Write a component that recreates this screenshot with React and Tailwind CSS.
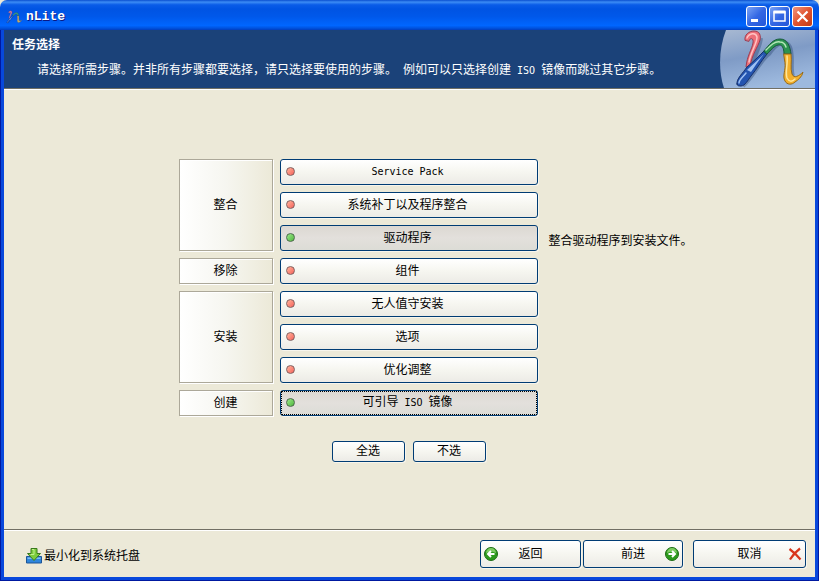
import { useState } from "react";

const GROUPS = [
  {
    label: "整合",
    span: "row-span-3",
    tasks: [
      { id: "sp", name: "Service Pack" },
      { id: "hotfix", name: "系统补丁以及程序整合" },
      { id: "drivers", name: "驱动程序", hint: "整合驱动程序到安装文件。" },
    ],
  },
  { label: "移除", span: "row-span-1", tasks: [{ id: "components", name: "组件" }] },
  {
    label: "安装",
    span: "row-span-3",
    tasks: [
      { id: "unattended", name: "无人值守安装" },
      { id: "options", name: "选项" },
      { id: "tweaks", name: "优化调整" },
    ],
  },
  { label: "创建", span: "row-span-1", tasks: [{ id: "iso", name: "可引导 ISO 镜像" }] },
];

const ALL_IDS = GROUPS.flatMap((g) => g.tasks.map((t) => t.id));

const BUTTON =
  "rounded-[3px] border border-[#003c74] shadow-[1px_1px_0_#f7f5ec] text-black";
const RAISED =
  "bg-linear-to-b from-white via-[#f6f6f0] to-[#ecebe6] hover:to-[#f6f4ea]";
const PRESSED = "bg-linear-to-b from-[#dcd8d2] via-[#e3e0dc] to-[#dcdcd6]";

// Latin words are set in a half-width face so they line up with the Chinese text
function Mixed({ text }) {
  return text.split(/([ A-Za-z]+)/).map((part, i) =>
    i % 2 ? (
      <span key={i} className="font-['DejaVu_Sans_Mono',monospace] text-[10px] whitespace-pre">
        {part}
      </span>
    ) : (
      part
    )
  );
}

function LogoStrokes() {
  return (
    <g strokeLinejoin="round" strokeLinecap="round">
      {/* red */}
      <path
        d="M26 10 C25 5 30 1 35 1 C41 1 42 6 41 10 C39 17 33 24 31 37 L27 37 C28 26 33 19 34 13 C35 8 31 7 30 11 Z"
        fill="#ee6f78"
        stroke="#9c3c50"
      />
      <path d="M28 8 C30 3 37 2 38 7 C38 14 32 21 30 32" fill="none" stroke="#ffc2c2" strokeWidth="1.500" />
      {/* blue */}
      <path
        d="M18 54 C17 49 24 43 28 37 C34 32 40 26 45 21 L48 24 C42 31 38 39 32 46 C29 50 26 56 22 56 C20 56 18 56 18 54 Z"
        fill="#2454b0"
        stroke="#16306c"
      />
      <path d="M28 40 C34 34 40 29 45 24 C40 30 36 36 32 42 Z" fill="#9fc0f2" />
      <path d="M20 53 C20 50 24 47 27 43" fill="none" stroke="#9fc0f2" strokeWidth="1.500" />
      {/* green */}
      <path
        d="M45 21 C50 15 54 9 61 9 C69 9 71 17 72 24 L65 24 C65 18 63 14 59 15 C55 16 52 20 48 24 Z"
        fill="#2b9250"
        stroke="#17593a"
      />
      <path d="M47 20 C52 15 56 11 61 12 C64 12 66 14 67 17" fill="none" stroke="#b5e6b8" strokeWidth="1.500" />
      {/* yellow */}
      <path
        d="M65 24 H72 C73 31 71 38 73 44 C75 49 80 46 84 42 C83 47 79 50 76 52 C73 55 68 55 66 51 C63 46 67 40 66 33 Z"
        fill="#f3b02c"
        stroke="#946a1c"
      />
      <path d="M68 26 C69 34 66 42 68 48 C70 52 73 52 76 49" fill="none" stroke="#ffe69a" strokeWidth="1.500" />
    </g>
  );
}

function HeaderLogo() {
  return (
    <svg viewBox="0 0 96 58" className="h-[58px] w-24 shrink-0" aria-hidden="true">
      <defs>
        <linearGradient id="disc" x1="0" y1="0" x2="0.3" y2="1">
          <stop offset="0" stopColor="#a8b9d2" />
          <stop offset="0.5" stopColor="#7f9bc6" />
          <stop offset="1" stopColor="#9db9de" />
        </linearGradient>
      </defs>
      <path d="M7 0 H96 V58 H5 C-1 40 0 18 7 0 Z" fill="url(#disc)" />
      <path
        d="M42 8 C41 18 35 25 33 37 M24 56 C34 47 40 32 50 24 C57 14 66 8 71 17 C75 27 71 38 74 46"
        fill="none"
        stroke="#1c3868"
        strokeWidth="4"
        opacity="0.35"
      />
      <LogoStrokes />
    </svg>
  );
}

function CaptionButton({ label, close, children }) {
  return (
    <button
      aria-label={label}
      className={`flex size-[21px] items-center justify-center rounded-[3px] border border-white bg-linear-to-br ${
        close ? "from-[#f0947c] via-[#e0532f] to-[#c43c14]" : "from-[#7ba2f4] via-[#3467e4] to-[#2456d8]"
      }`}
    >
      <svg viewBox="0 0 19 19" className="size-[19px]" fill="none" stroke="white">
        {children}
      </svg>
    </button>
  );
}

function TitleBar() {
  return (
    <div className="flex h-[30px] shrink-0 items-center rounded-t-[7px] bg-[linear-gradient(to_bottom,#0a4fd0_0,#3c8cf5_7%,#0a5ce8_16%,#0054e3_30%,#0058ea_55%,#0066ff_85%,#0052dd_94%,#003dc0_100%)] px-1.5 pt-[3px]">
      <svg viewBox="14 0 72 58" className="mr-1 size-4" aria-hidden="true" opacity="0.8">
        <LogoStrokes />
      </svg>
      <span className="flex-1 font-['Liberation_Mono',monospace] text-[13px] font-bold text-white [text-shadow:1px_1px_0_#0a1883]">
        nLite
      </span>
      <div className="flex gap-0.5">
        <CaptionButton label="最小化">
          <path d="M4 13.5 H11" strokeWidth="3" />
        </CaptionButton>
        <CaptionButton label="最大化">
          <path d="M4 5 H15 V14 H4 Z" strokeWidth="1.500" />
          <path d="M3.500 5 H15.500" strokeWidth="3" />
        </CaptionButton>
        <CaptionButton label="关闭" close>
          <path d="M4.500 4.500 L14.500 14.500 M14.500 4.500 L4.500 14.500" strokeWidth="2.200" />
        </CaptionButton>
      </div>
    </div>
  );
}

function Led({ on }) {
  return (
    <span
      className={`size-[9px] rounded-full border ${
        on
          ? "border-[#4c6a4c] bg-linear-to-br from-[#9be88a] to-[#4fb83c]"
          : "border-[#806060] bg-linear-to-br from-[#ffb49c] to-[#f4605c]"
      }`}
    />
  );
}

function TaskButton({ task, on, focused, onClick }) {
  return (
    <button
      aria-pressed={on}
      onClick={onClick}
      className={`relative col-start-2 flex items-center pr-4 pl-[5px] ${BUTTON} ${on ? PRESSED : RAISED}`}
    >
      <Led on={on} />
      <span className="flex-1 text-center">
        <Mixed text={task.name} />
      </span>
      {focused && <span className="absolute inset-0 border border-dotted border-black" />}
    </button>
  );
}

function ArrowIcon({ forward }) {
  return (
    <svg viewBox="0 0 14 14" className="size-3.5" aria-hidden="true">
      <circle cx="7" cy="7" r="6.500" fill="#2c9a1c" stroke="#1d6b14" />
      <path d="M2 6 A5 5 0 0 1 12 6 Q7 3 2 6 Z" fill="#7ccb62" />
      <path
        d={forward ? "M3.500 7 H10 M7 4 L10 7 L7 10" : "M10.500 7 H4 M7 4 L4 7 L7 10"}
        fill="none"
        stroke="white"
        strokeWidth="2"
      />
    </svg>
  );
}

function NavButton({ width, left, right, children }) {
  return (
    <button className={`grid h-7 grid-cols-[14px_1fr_14px] items-center px-[3px] ${width} ${BUTTON} ${RAISED}`}>
      <span>{left}</span>
      <span>{children}</span>
      <span>{right}</span>
    </button>
  );
}

function Footer() {
  return (
    <footer className="flex h-12 shrink-0 items-center border-t border-[#716f64] pr-[9px] pl-[22px] shadow-[inset_0_1px_0_white]">
      <button className="flex items-center gap-0.5 pt-1">
        <svg viewBox="0 0 16 16" className="size-4" aria-hidden="true">
          <path d="M0.500 8.500 H15.500 V15 H0.500 Z" fill="#2f86dc" stroke="#1c5596" />
          <path d="M1.500 9.500 H14.500 V11 H1.500 Z" fill="#7cbcf4" />
          <path d="M5 0.500 H11 V5.500 H14.500 L8 12.500 L1.500 5.500 H5 Z" fill="#7ccc3c" stroke="#38791c" />
          <path d="M6 1.500 H8 V6.500 H4.500" fill="none" stroke="#c3ef90" />
        </svg>
        最小化到系统托盘
      </button>
      <div className="ml-auto flex items-center gap-0.5">
        <NavButton width="w-[101px]" left={<ArrowIcon />}>
          返回
        </NavButton>
        <NavButton width="w-[100px]" right={<ArrowIcon forward />}>
          前进
        </NavButton>
        <div className="w-1.5" />
        <NavButton
          width="w-[113px]"
          right={
            <svg viewBox="0 0 14 14" className="size-3.5" aria-hidden="true">
              <path d="M1.500 2 Q7 6 12.500 12.500 M12 1.500 Q6 6 2 12.500" fill="none" stroke="#d8361c" strokeWidth="2.200" />
            </svg>
          }
        >
          取消
        </NavButton>
      </div>
    </footer>
  );
}

export default function App() {
  const [selected, setSelected] = useState(["drivers", "iso"]);
  const [focused, setFocused] = useState("iso");

  function toggle(id) {
    setFocused(id);
    setSelected((prev) => (prev.includes(id) ? prev.filter((x) => x !== id) : [...prev, id]));
  }

  return (
    <div className="flex min-h-screen flex-col bg-[#ece9d8] font-['Liberation_Sans','Noto_Sans_CJK_SC',sans-serif] text-[12px] leading-4 text-black">
      <TitleBar />

      <div className="flex flex-1 flex-col border-x border-b border-[#0019a0]">
        <div className="flex flex-1 flex-col border-x-3 border-b-3 border-[#0848dc]">
          <header className="flex shrink-0 justify-between border-b border-[#716f64] bg-[#1b4279] text-white shadow-[0_1px_0_white]">
            <div className="pt-[7px] pl-2">
              <h1 className="font-bold">任务选择</h1>
              <p className="pt-[9px] pl-[25px] whitespace-nowrap">
                <Mixed text="请选择所需步骤。并非所有步骤都要选择，请只选择要使用的步骤。 例如可以只选择创建 ISO 镜像而跳过其它步骤。" />
              </p>
            </div>
            <HeaderLogo />
          </header>

          <main className="flex flex-1 flex-col justify-center gap-[25px] pt-0.5 pr-0.5">
            <div className="grid auto-rows-[26px] grid-cols-[1fr_258px_1fr] gap-[7px]">
              {GROUPS.map((group) => [
                <div
                  key={group.label}
                  className={`col-start-1 flex w-[94px] items-center justify-center justify-self-end border border-[#aca899] bg-linear-to-r from-white via-[#f6f6f0] to-[#ece9d8] shadow-[1px_1px_0_white,inset_0_1px_0_white] ${group.span}`}
                >
                  {group.label}
                </div>,
                ...group.tasks.map((task) => [
                  <TaskButton
                    key={task.id}
                    task={task}
                    on={selected.includes(task.id)}
                    focused={focused === task.id}
                    onClick={() => toggle(task.id)}
                  />,
                  <p key={`${task.id}-hint`} className="col-start-3 pt-2 pl-1">
                    {task.hint}
                  </p>,
                ]),
              ])}
            </div>

            <div className="flex justify-center gap-2">
              <button
                className={`h-[21px] w-[73px] ${BUTTON} ${RAISED}`}
                onClick={() => setSelected(ALL_IDS)}
              >
                全选
              </button>
              <button
                className={`h-[21px] w-[73px] ${BUTTON} ${RAISED}`}
                onClick={() => setSelected([])}
              >
                不选
              </button>
            </div>
          </main>

          <Footer />
        </div>
      </div>
    </div>
  );
}
